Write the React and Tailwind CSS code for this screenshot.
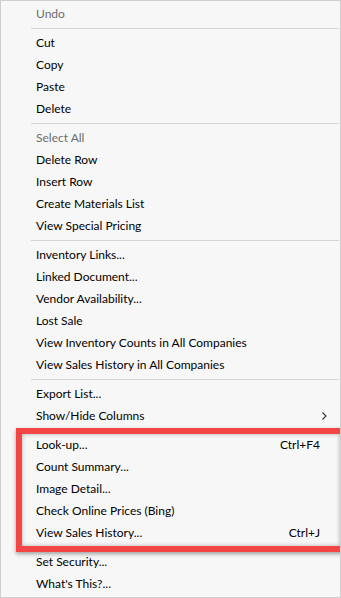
const groups = [
  [{ label: "Undo", disabled: true }],
  [{ label: "Cut" }, { label: "Copy" }, { label: "Paste" }, { label: "Delete" }],
  [
    { label: "Select All", disabled: true },
    { label: "Delete Row" },
    { label: "Insert Row" },
    { label: "Create Materials List" },
    { label: "View Special Pricing" },
  ],
  [
    { label: "Inventory Links..." },
    { label: "Linked Document..." },
    { label: "Vendor Availability..." },
    { label: "Lost Sale" },
    { label: "View Inventory Counts in All Companies" },
    { label: "View Sales History in All Companies" },
  ],
  [{ label: "Export List..." }, { label: "Show/Hide Columns", submenu: true }],
  [
    { label: "Look-up...", shortcut: "Ctrl+F4" },
    { label: "Count Summary..." },
    { label: "Image Detail..." },
    { label: "Check Online Prices (Bing)" },
    { label: "View Sales History...", shortcut: "Ctrl+J" },
  ],
  [{ label: "Set Security..." }, { label: "What's This?..." }],
];

function MenuItem({ item }) {
  return (
    <div
      className={`h-[22px] flex items-center pl-[35px] pr-[20px] ${
        item.disabled ? "text-[#6d6d6d]" : "text-black"
      }`}
    >
      <span className="flex-1">{item.label}</span>
      {item.shortcut && <span>{item.shortcut}</span>}
      {item.submenu && (
        <svg width="5" height="8" viewBox="0 0 5 8" className="-mr-[7px]">
          <path d="M0.5 0.5 L4 4 L0.5 7.5" fill="none" stroke="#333" strokeWidth="1.1" />
        </svg>
      )}
    </div>
  );
}

export default function App() {
  return (
    <div className="relative w-[341px] h-[598px] bg-[#f7f7f7] border border-[#cfcfcf] pt-[2px] font-['Lato',sans-serif] text-[12px] overflow-hidden">
      {groups.map((group, i) => (
        <div key={i}>
          {i > 0 && (
            <div className="h-[7px] flex items-center pl-[30px] pr-px">
              <div className="h-px w-full bg-[#d4d4d4]" />
            </div>
          )}
          {group.map((item) => (
            <MenuItem key={item.label} item={item} />
          ))}
        </div>
      ))}
      <div className="absolute left-[15px] top-[427px] w-[330px] h-[124px] border-[6px] border-[#f44545] shadow-[0_2px_4px_rgba(0,0,0,0.35),inset_0_0_4px_rgba(0,0,0,0.3)]" />
    </div>
  );
}
